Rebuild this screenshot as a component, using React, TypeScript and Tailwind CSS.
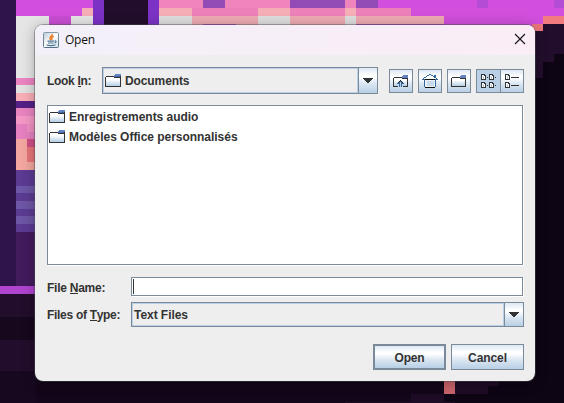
import React from "react";

type Block = [number, number, number, number, string];

const M = "#d14fdc";
const K = "#f084bd";
const P = "#f6aeb6";
const L = "#e5e5e5";

// Pixel-art wallpaper: x, y, width, height, fill
const blocks: Block[] = [
  [0, 0, 16, 286, "#2e144a"],
  [16, 0, 77, 16, M], [82, 8, 11, 8, P], [16, 16, 77, 62, L], [49, 16, 22, 10, "#c94dd3"],
  [93, 0, 11, 30, "#7b32c5"], [104, 0, 44, 30, "#220e2c"], [148, 0, 11, 30, "#7b32c5"],
  [159, 0, 219, 8, K], [203, 0, 22, 8, "#934bb5"], [290, 0, 55, 8, "#934bb5"], [356, 0, 22, 8, "#934bb5"],
  [159, 8, 33, 8, P], [192, 8, 252, 8, "#ec80b9"], [258, 8, 32, 8, P], [345, 8, 11, 8, P],
  [159, 16, 33, 9, "#dedede"], [192, 16, 252, 9, "#eeaab2"], [258, 16, 32, 9, "#dedede"], [345, 16, 11, 9, "#dedede"],
  [203, 24, 33, 1, "#b04bc8"], [356, 24, 88, 1, "#b04bc8"],
  [378, 0, 186, 8, M], [411, 8, 153, 8, M], [444, 16, 120, 16, M],
  [477, 0, 11, 8, "#b54cd6"], [554, 0, 10, 8, "#b54cd6"],
  [543, 16, 21, 8, "#f27b80"], [532, 24, 11, 7, "#ec777c"],
  [543, 24, 21, 30, "#220e2c"], [543, 54, 11, 8, "#220e2c"], [530, 31, 13, 47, "#220e2c"],
  [16, 78, 20, 7, "#ec84c1"], [16, 85, 20, 8, "#e2e2e2"], [16, 93, 20, 8, "#f8aeb7"],
  [16, 101, 20, 7, "#532086"], [16, 108, 20, 8, "#e884c0"], [16, 116, 20, 8, "#f597c6"],
  [16, 124, 20, 15, "#e680c0"], [27, 124, 9, 8, "#f08fc3"],
  [16, 139, 20, 31, "#f3a69f"], [27, 139, 9, 8, "#d04e84"], [27, 147, 9, 15, "#e7757b"],
  [16, 170, 20, 62, "#5b3b93"], [16, 186, 20, 7, "#6d56a5"], [16, 201, 20, 8, "#6d56a5"], [16, 216, 20, 8, "#6d56a5"],
  [16, 232, 20, 54, "#421b5d"],
  [0, 286, 36, 8, "#b044d0"], [0, 294, 36, 23, "#230d2c"], [0, 317, 36, 23, "#17081d"],
  [0, 340, 36, 31, "#230d2c"], [0, 371, 36, 32, "#170820"],
  [36, 376, 408, 27, "#13061a"],
  [444, 376, 11, 18, "#c9636a"], [455, 376, 44, 10, "#1e0b26"], [455, 386, 33, 8, "#1e0b26"],
  [411, 394, 33, 9, "#1e0b26"], [345, 402, 110, 1, "#1e0b26"],
];

function Wallpaper() {
  return (
    <svg className="absolute inset-0" width="564" height="403" shapeRendering="crispEdges">
      <rect width="564" height="403" fill="#0d0414" />
      {blocks.map(([x, y, w, h, c], i) => (
        <rect key={i} x={x} y={y} width={w} height={h} fill={c} />
      ))}
    </svg>
  );
}

function Folder() {
  return (
    <svg width="16" height="16" shapeRendering="crispEdges" className="shrink-0">
      <defs>
        <linearGradient id="folder" x1="0" y1="0" x2="0" y2="1">
          <stop offset="0.3" stopColor="#ffffff" />
          <stop offset="1" stopColor="#b4cde5" />
        </linearGradient>
      </defs>
      <rect x="1" y="4" width="14" height="9" fill="url(#folder)" />
      <path d="M1 3h8v1H1zM0 4h1v10H0zM1 13h15v1H1zM15 3h1v11h-1zM9 4h6v1H9z" fill="#333" />
      <path d="M10 1h6v2h-6zM9 2h1v2H9z" fill="#6382bf" />
      <path d="M10 3h5v1h-5z" fill="#4668a5" />
    </svg>
  );
}

function NewFolder() {
  return (
    <svg width="16" height="16" shapeRendering="crispEdges">
      <rect x="1" y="5" width="13" height="8" fill="url(#folder)" />
      <path d="M1 4h8v1H1zM0 5h1v8H0zM0 13h15v1H0zM14 5h1v9h-1zM9 5h5v1H9z" fill="#333" />
      <path d="M10 2h5v3h-6V3h1z" fill="#6382bf" />
    </svg>
  );
}

function UpFolder() {
  return (
    <svg width="16" height="16" shapeRendering="crispEdges">
      <rect x="1" y="5" width="13" height="8" fill="url(#folder)" />
      <path d="M1 4h8v1H1zM0 5h1v8H0zM0 13h5v1H0zM10 13h5v1h-5zM14 5h1v9h-1zM9 5h5v1H9z" fill="#333" />
      <path d="M10 2h5v3h-6V3h1z" fill="#6382bf" />
      <path d="M7 7h1v1H7zM6 8h3v1H6zM5 9h5v1H5zM4 10h7v1H4zM6 11h3v3H6z" fill="#35689a" />
      <path d="M7 7h1v1H7zM6 8h1v1H6zM8 8h1v1H8zM5 9h1v1H5zM9 9h1v1H9z" fill="#222" />
      <path d="M7 9h1v5H7z" fill="#b8cfe5" />
    </svg>
  );
}

function Home() {
  return (
    <svg width="16" height="16" shapeRendering="crispEdges">
      <path d="M7 2h2v1h2v1h2v1h1v1h1v1h1v1H0V7h1V6h1V5h2V4h1V3h2z" fill="#fff" />
      <path d="M7 1h2v1H7zM5 2h2v1H5zM9 2h2v1H9zM4 3h1v1H4zM11 3h1v1h-1zM12 2h2v3h-2zM2 4h2v1H2zM1 5h1v1H1zM14 5h1v1h-1zM0 6h1v1H0zM15 6h1v1h-1z" fill="#35689a" />
      <path d="M2 7h1v7H2zM13 7h1v7h-1zM1 6h2v1H1zM13 6h2v1h-2z" fill="#35689a" />
      <path d="M3 6h10v1H3zM3 14h10v1H3z" fill="#111" />
      <path d="M3 7h10v7H3z" fill="#e9f0f7" />
      <path d="M5 8h7v5H5z" fill="#c8d9e9" />
    </svg>
  );
}

function Tile({ x, y }: { x: number; y: number }) {
  return (
    <g>
      <path d={`M${x} ${y}h4v1h1v5h-5z`} fill="#333" />
      <path d={`M${x + 1} ${y + 1}h2v1h1v3h-3z`} fill="#fff" />
      <path d={`M${x + 2} ${y + 2}h1v3h-1z`} fill="#b8cfe5" />
    </g>
  );
}

function ListView() {
  return (
    <svg width="16" height="16" shapeRendering="crispEdges">
      <Tile x={0} y={1} /><Tile x={8} y={1} /><Tile x={0} y={9} /><Tile x={8} y={9} />
      <path d="M6 4h1v1H6zM14 4h1v1h-1zM6 12h1v1H6zM14 12h1v1h-1z" fill="#333" />
    </svg>
  );
}

function DetailView() {
  return (
    <svg width="16" height="16" shapeRendering="crispEdges">
      <Tile x={0} y={1} /><Tile x={0} y={9} />
      <path d="M6 4h8v1H6zM6 12h8v1H6z" fill="#333" />
    </svg>
  );
}

function JavaIcon() {
  return (
    <svg width="16" height="16">
      <defs>
        <linearGradient id="java" x1="0" y1="0" x2="0" y2="1">
          <stop offset="0" stopColor="#8499a8" />
          <stop offset="1" stopColor="#527188" />
        </linearGradient>
        <linearGradient id="javaIn" x1="0" y1="0" x2="1" y2="1">
          <stop offset="0" stopColor="#b9c8d2" />
          <stop offset="0.5" stopColor="#ffffff" />
          <stop offset="1" stopColor="#d3dfe7" />
        </linearGradient>
      </defs>
      <rect x="0.5" y="0.5" width="15" height="15" rx="1" fill="url(#javaIn)" stroke="url(#java)" />
      <path d="M9.2 2C10 4 5.800 4.800 7 6.800L8 8.200M10.800 4.200C8.300 5.300 8.100 6.500 9.300 8" fill="none" stroke="#e8802c" strokeWidth="1.500" />
      <path d="M4.500 9.200h6.500M5 11h5.500M3.500 12.800c2 1.100 6.500 1.100 9 0M11.500 9c2-.5 2.200 1.300 0 2" fill="none" stroke="#4c7593" strokeWidth="1.200" />
    </svg>
  );
}

const face = "bg-[linear-gradient(to_bottom,#dde8f3_0%,#ffffff_30%,#ffffff_36%,#dde8f3_60%,#b8cfe5_100%)]";

function ToolButton({ children }: { children: React.ReactNode }) {
  return (
    <button className={`flex size-6 items-center border border-[#7a8a99] pl-[3px] ${face}`}>{children}</button>
  );
}

function ArrowCell() {
  return (
    <div className={`flex w-[19px] items-center justify-center border-l border-[#7a8a99] ${face}`}>
      <svg width="10" height="5" shapeRendering="crispEdges">
        <path d="M0 0h10v1H0zM1 1h8v1H1zM2 2h6v1H2zM3 3h4v1H3zM4 4h2v1H4z" fill="#333" />
      </svg>
    </div>
  );
}

function FileRow({ name }: { name: string }) {
  return (
    <div className="flex h-5 items-center gap-1">
      <Folder />
      <span className="tracking-[-0.03px]">{name}</span>
    </div>
  );
}

function Mnemonic({ children }: { children: string }) {
  return <span className="inline-block h-[13px] border-b border-[#333] leading-[14px]">{children}</span>;
}

export default function App() {
  return (
    <div className="relative h-[403px] w-[564px] overflow-hidden font-['Liberation_Sans',Arial,sans-serif] text-xs leading-[14px] font-bold text-[#333]">
      <Wallpaper />
      <div className="absolute top-[25px] left-[35px] h-[356px] w-[500px] rounded-lg shadow-[0_0_0_1px_rgba(75,75,80,0.45),0_2px_14px_rgba(0,0,0,0.3)]">
        <div className="flex h-full flex-col overflow-hidden rounded-lg bg-[#eee]">
          <header className="flex h-[30px] shrink-0 items-center bg-linear-to-r from-[#f3f0f9] to-[#faedf6] pr-[9px] pl-2 font-['Open_Sans',sans-serif] font-normal text-[#111]">
            <JavaIcon />
            <span className="ml-1.5 grow text-[12px] tracking-[-0.25px]">Open</span>
            <svg width="12" height="12" className="mb-[2px]">
              <path d="M1 1l10 10M11 1L1 11" stroke="#161616" strokeWidth="1.150" />
            </svg>
          </header>
          <div className="flex grow flex-col pt-3 pr-[11px] pl-3">
            <div className="flex h-[27px] items-center">
              <span className="w-[55px] tracking-[-0.3px] whitespace-nowrap">Look <Mnemonic>I</Mnemonic>n:</span>
              <div className="flex h-[27px] w-[276px] border border-[#7a8a99]">
                <div className="flex grow items-center gap-1 border border-[#b8cfe5] pl-[1px]">
                  <Folder />
                  <span className="tracking-[-0.1px]">Documents</span>
                </div>
                <ArrowCell />
              </div>
              <div className="ml-[11px] flex gap-[5px]">
                <ToolButton><UpFolder /></ToolButton>
                <ToolButton><Home /></ToolButton>
                <ToolButton><NewFolder /></ToolButton>
                <div className="flex">
                  <button className="flex h-6 w-[25px] items-center border border-[#7a8a99] bg-[#b8cfe5] pl-1"><ListView /></button>
                  <button className={`flex h-6 w-[23px] items-center border border-l-0 border-[#7a8a99] pl-1 ${face}`}><DetailView /></button>
                </div>
              </div>
            </div>
            <div className="mt-[11px] h-[160px] w-[476px] border border-[#7a8a99] bg-white pt-[1px] pl-[1px] shadow-[1px_1px_0_#fff]">
              <FileRow name="Enregistrements audio" />
              <FileRow name="Modèles Office personnalisés" />
            </div>
            <div className="mt-3 flex h-[19px] items-center">
              <span className="w-[84px] pt-[2px] tracking-[-0.25px]">File <Mnemonic>N</Mnemonic>ame:</span>
              <div className="h-[19px] w-[392px] border border-[#7a8a99] bg-white py-[1px] pl-[1px] shadow-[1px_1px_0_#fff]">
                <div className="h-[15px] w-px bg-[#333]" />
              </div>
            </div>
            <div className="mt-[6px] flex h-[25px] items-center">
              <span className="w-[84px] tracking-[-0.3px] whitespace-nowrap">Files of <Mnemonic>T</Mnemonic>ype:</span>
              <div className="flex h-[25px] w-[393px] border border-[#7a8a99]">
                <div className="flex grow items-center border border-[#b8cfe5] pl-[1px] tracking-[-0.05px]">Text Files</div>
                <ArrowCell />
              </div>
            </div>
            <div className="mt-[17px] flex justify-end gap-[5px]">
              <button className={`h-[26px] w-[73px] border-2 border-[#7a8a99] pt-[2px] tracking-[-0.2px] ${face}`}>Open</button>
              <button className={`h-[26px] w-[73px] border border-[#7a8a99] pt-[2px] tracking-[-0.1px] ${face}`}>Cancel</button>
            </div>
          </div>
        </div>
      </div>
    </div>
  );
}
